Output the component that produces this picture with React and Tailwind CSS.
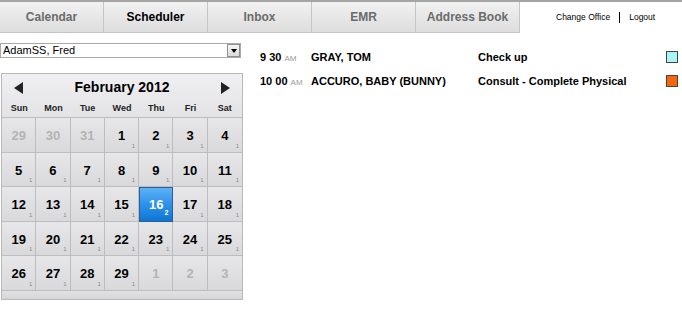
import React from 'react';

const TABS = [
  { label: 'Calendar', w: 'w-[104px]' },
  { label: 'Scheduler', w: 'w-[104px]', active: true },
  { label: 'Inbox', w: 'w-[104px]' },
  { label: 'EMR', w: 'w-[104px]' },
  { label: 'Address Book', w: 'w-[104px]' },
];

const APPTS = [
  { time: '9 30', ampm: 'AM', name: 'GRAY, TOM', reason: 'Check up', color: 'bg-[#a8f5f5]' },
  { time: '10 00', ampm: 'AM', name: 'ACCURO, BABY (BUNNY)', reason: 'Consult - Complete Physical', color: 'bg-[#f4670c]' },
];

// 5 weeks, Feb 2012
const DAYS = [
  [29, true], [30, true], [31, true], [1], [2], [3], [4],
  [5], [6], [7], [8], [9], [10], [11],
  [12], [13], [14], [15], [16, false, true], [17], [18],
  [19], [20], [21], [22], [23], [24], [25],
  [26], [27], [28], [29], [1, true], [2, true], [3, true],
];

function Cell({ n, other, selected, col }) {
  const last = col === 6;
  if (selected) {
    return (
      <div className="relative h-[34.5px] border border-[#2f5f8e] bg-gradient-to-b from-[#5bb2f6] via-[#2b91ea] to-[#0b76d4] flex justify-center">
        <span className="mt-[7px] text-[13px] font-bold text-white">{n}</span>
        <span className="absolute right-[4px] bottom-[2px] text-[7px] font-bold text-white">2</span>
      </div>
    );
  }
  return (
    <div
      className={`relative h-[34.5px] border-b border-[#bdbdbf] ${last ? '' : 'border-r'} bg-gradient-to-b from-[#e7e7e9] to-[#d9d9db] flex justify-center`}
    >
      <span className={`mt-[8px] text-[13px] font-bold ${other ? 'text-[#b3b3b3]' : 'text-black'}`}>{n}</span>
      {!other && (
        <span className="absolute right-[3px] bottom-[1px] text-[6px] text-[#8a8a8a]">1</span>
      )}
    </div>
  );
}

export default function App() {
  return (
    <div className="w-[682px] h-[310px] bg-white font-['Liberation_Sans',Arial,sans-serif] overflow-hidden">
      {/* top nav */}
      <div className="flex border-t-2 border-[#a5a5a5]">
        {TABS.map((t) => (
          <div
            key={t.label}
            className={`${t.w} h-[31px] flex items-center justify-center border-r border-b border-[#c6c6c6] bg-gradient-to-b from-[#f1f1f1] to-[#dddddd] text-[12px] font-bold ${t.active ? 'text-black' : 'text-[#6b6b6b]'}`}
          >
            {t.label}
          </div>
        ))}
        <div className="flex-1 flex items-center gap-[9px] text-[8.5px] text-black pl-[36px]">
          <span>Change Office</span>
          <span className="w-px h-[11px] bg-black" />
          <span>Logout</span>
        </div>
      </div>

      <div className="flex">
        {/* left column */}
        <div className="w-[244px]">
          <div className="mt-[10px] w-[241px] h-[15px] border border-[#a9a9a9] flex items-center">
            <span className="flex-1 pl-[2px] text-[11px] text-black leading-none">AdamSS, Fred</span>
            <span className="w-[13px] h-[13px] border border-[#8f8f8f] bg-gradient-to-b from-[#f5f5f5] to-[#dcdcdc] flex items-center justify-center">
              <span className="w-0 h-0 border-l-[3px] border-r-[3px] border-t-[4px] border-l-transparent border-r-transparent border-t-black" />
            </span>
          </div>

          <div className="mt-[15px] ml-px w-[242px] border border-[#b9b9bb] bg-[#dcdcde]">
            <div className="bg-gradient-to-b from-[#f0f0f2] to-[#e3e3e5]">
              <div className="h-[27px] flex items-center justify-between px-[12px]">
                <span className="w-0 h-0 border-t-[6px] border-b-[6px] border-r-[9px] border-t-transparent border-b-transparent border-r-[#222]" />
                <span className="text-[14px] font-bold text-black">February 2012</span>
                <span className="w-0 h-0 border-t-[6px] border-b-[6px] border-l-[9px] border-t-transparent border-b-transparent border-l-[#222]" />
              </div>
              <div className="grid grid-cols-7 h-[16px] items-center text-[9px] font-bold text-[#222] text-center">
                {['Sun', 'Mon', 'Tue', 'Wed', 'Thu', 'Fri', 'Sat'].map((d) => (
                  <span key={d}>{d}</span>
                ))}
              </div>
            </div>
            <div className="grid grid-cols-7 border-t border-[#bdbdbf]">
              {DAYS.map(([n, other, selected], i) => (
                <Cell key={i} n={n} other={other} selected={selected} col={i % 7} />
              ))}
            </div>
            <div className="h-[8px] bg-gradient-to-b from-[#e2e2e4] to-[#d6d6d8]" />
          </div>
        </div>

        {/* appointments */}
        <div className="flex-1 pl-[16px] pt-[12px]">
          {APPTS.map((a) => (
            <div key={a.name} className="flex items-center h-[24px] text-[11px] font-bold text-black">
              <span className="w-[51px]">
                {a.time} <span className="text-[8px] font-normal text-[#9a9a9a]">{a.ampm}</span>
              </span>
              <span className="w-[167px]">{a.name}</span>
              <span className="flex-1">{a.reason}</span>
              <span className={`w-[12px] h-[12px] mr-[4px] border border-[#444] ${a.color}`} />
            </div>
          ))}
        </div>
      </div>
    </div>
  );
}
